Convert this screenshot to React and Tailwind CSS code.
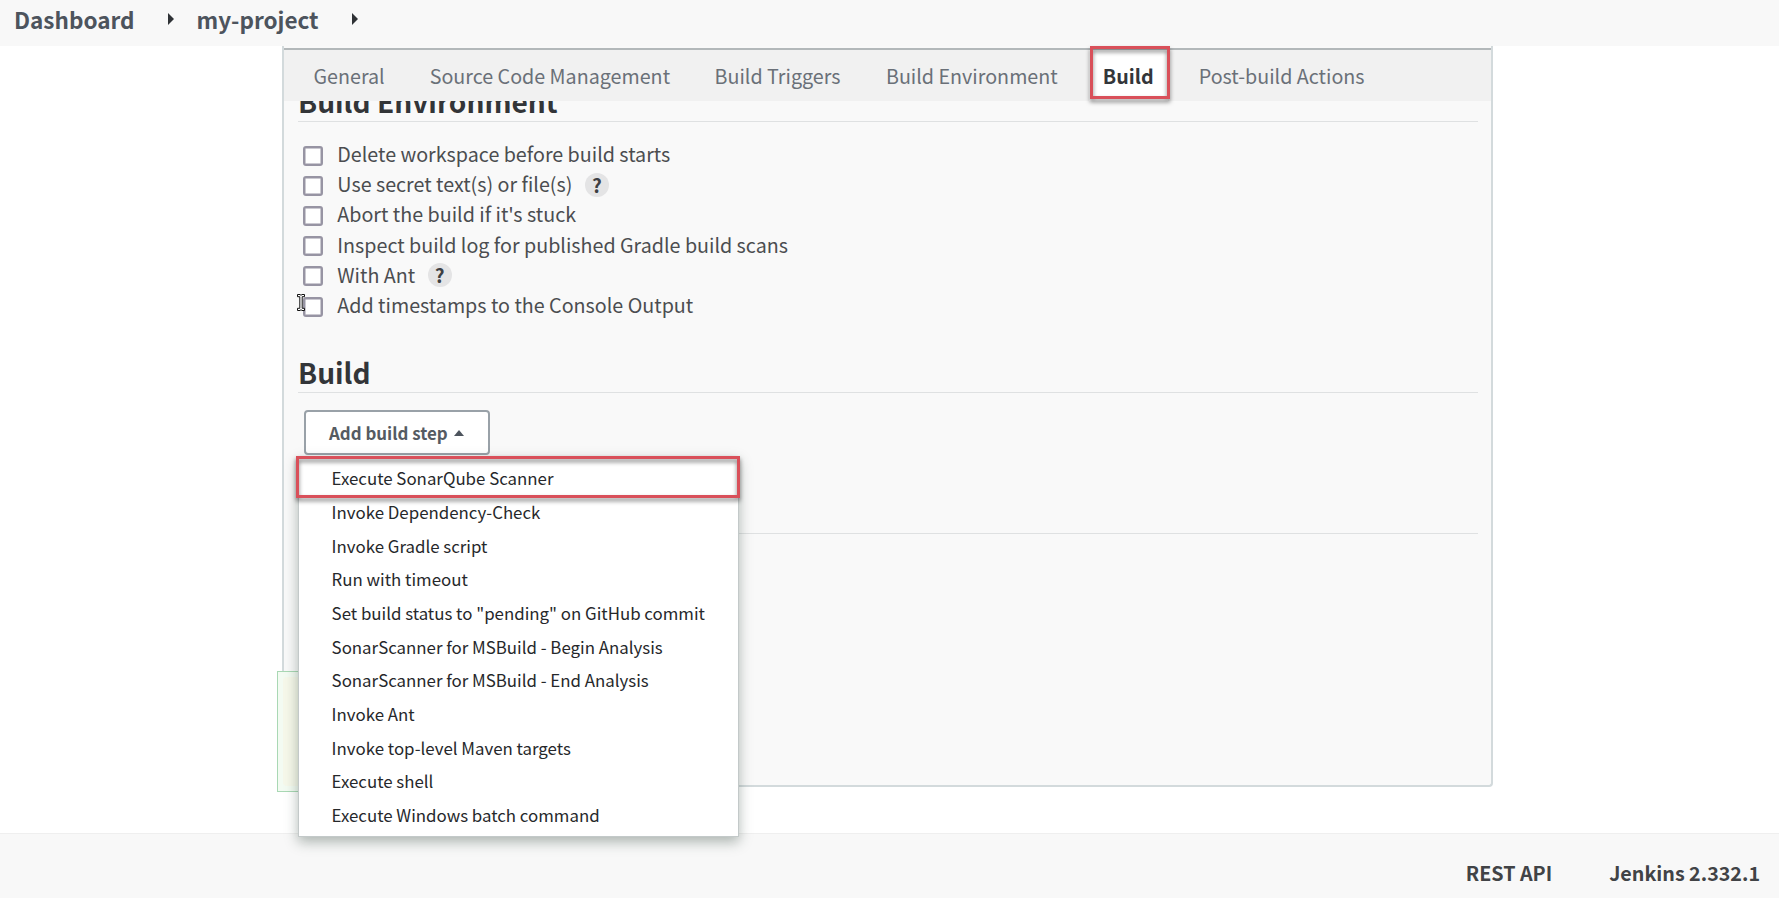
const tabs = [
  { label: "General", className: "ml-[29.5px]" },
  { label: "Source Code Management", className: "ml-[45px]" },
  { label: "Build Triggers", className: "ml-[44.5px]" },
  { label: "Build Environment", className: "ml-[45.5px]" },
];

const options = [
  { label: "Delete workspace before build starts" },
  { label: "Use secret text(s) or file(s)", help: true },
  { label: "Abort the build if it's stuck" },
  { label: "Inspect build log for published Gradle build scans" },
  { label: "With Ant", help: true },
  { label: "Add timestamps to the Console Output", cursor: true },
];

const steps = [
  "Execute SonarQube Scanner",
  "Invoke Dependency-Check",
  "Invoke Gradle script",
  "Run with timeout",
  'Set build status to "pending" on GitHub commit',
  "SonarScanner for MSBuild - Begin Analysis",
  "SonarScanner for MSBuild - End Analysis",
  "Invoke Ant",
  "Invoke top-level Maven targets",
  "Execute shell",
  "Execute Windows batch command",
];

function Arrow({ className }) {
  return (
    <svg viewBox="0 0 6 12" className={`h-3 w-1.5 fill-[#2f3236] ${className}`}>
      <path d="M0 0L6 6L0 12Z" />
    </svg>
  );
}

function TextCursor() {
  return (
    <svg viewBox="0 0 8 17" className="absolute top-[2.5px] left-[-6px] h-[17px] w-2">
      <path
        d="M0.5 0.5H3L4 1.3L5 0.5H7.5V2.7H5.2V14.3H7.5V16.5H5L4 15.7L3 16.5H0.5V14.3H2.8V2.7H0.5Z"
        fill="#fff"
        stroke="#111"
        strokeWidth="1"
      />
    </svg>
  );
}

function Option({ label, help, cursor }) {
  return (
    <div className="relative flex h-[30.2px] items-center">
      <span className="mb-px h-5 w-5 rounded-[3px] border-2 border-[#9794a3] bg-white shadow-[inset_0_0_0_0.5px_#9794a3]" />
      <span className="ml-[14.3px] h-[30px] text-[19.7px] leading-[25px] text-[#4b4d50]">{label}</span>
      {help && (
        <span className="mb-[3px] ml-[12.5px] flex h-6 w-6 items-center justify-center rounded-full bg-[#e4e4e5] text-[19px] leading-6 font-bold text-[#3d3f43]">
          ?
        </span>
      )}
      {cursor && <TextCursor />}
    </div>
  );
}

function HighlightFrame({ className }) {
  return (
    <div
      className={`pointer-events-none absolute border-[3px] border-[#d9505a] drop-shadow-[0_3px_2px_rgba(0,0,0,0.5)] ${className}`}
    />
  );
}

export default function App() {
  return (
    <div className="flex h-[898px] w-[1779px] flex-col overflow-hidden bg-white font-['Noto_Sans_CJK_JP','Noto_Sans_CJK_SC',sans-serif]">
      <header className="flex h-[46px] shrink-0 items-start bg-[#f8f8f8] text-[22.5px] leading-[38px] font-bold text-[#4d545d]">
        <span className="ml-[14px]">Dashboard</span>
        <Arrow className="mt-[13px] ml-[33px]" />
        <span className="ml-[23px]">my-project</span>
        <Arrow className="mt-[13px] ml-[33px]" />
      </header>

      <main className="relative h-[787px] shrink-0">
        <section className="relative ml-[282px] flex h-[741px] w-[1211px] flex-col rounded-b-[4px] border-x-2 border-b-2 border-[#d3dadc] bg-[#f9f9f9] pt-0.5">
          <nav className="relative flex h-[53px] shrink-0 items-stretch border-t-2 border-[#b3b8ba] bg-[#f1f1f1] text-[19.7px] leading-[51px] text-[#6a7078]">
            {tabs.map((t) => (
              <a key={t.label} className={t.className}>
                {t.label}
              </a>
            ))}
            <a className="ml-[31px] w-[79px] bg-white text-center font-bold text-[#33363a]">Build</a>
            <a className="ml-[31px]">Post-build Actions</a>
            <HighlightFrame className="top-[-4px] left-[806px] h-[53px] w-[80px]" />
          </nav>

          <div className="flex flex-col pr-[13px] pl-[14px]">
            <div className="h-[21px] overflow-hidden border-b border-[#dfe1e2]">
              <h2 className="mt-[-18px] text-[28.1px] leading-9 font-bold text-[#333538]">Build Environment</h2>
            </div>
            <div className="mt-[19px] pl-[5px]">
              {options.map((o) => (
                <Option key={o.label} {...o} />
              ))}
            </div>
            <h2 className="mt-[31px] h-[40px] border-b border-[#dfe1e2] text-[28.1px] leading-[38px] font-bold text-[#333538]">
              Build
            </h2>
            <div className="relative mt-[17px] pl-[5.5px]">
              <button className="flex h-[45px] w-[186px] items-center rounded-[4px] border-2 border-[#99a1a8] bg-white pt-[2px] pl-[23.5px] text-[16.9px] leading-none font-bold text-[#555b62]">
                Add build step
                <svg viewBox="0 0 10 6" className="mb-0.5 ml-[6.5px] h-1.5 w-[10px] fill-[#4d545d]">
                  <path d="M0 6L5 0L10 6Z" />
                </svg>
              </button>
              <div className="absolute top-[46px] left-0 z-10 w-[441px] border border-[#c3c9c9] bg-white pb-[4px] shadow-[0_5px_12px_rgba(40,60,50,0.36)]">
                <ul className="pt-1">
                  {steps.map((s) => (
                    <li key={s} className="h-[33.7px] pl-[32.6px] text-[16.85px] leading-[33.2px] text-[#26282b]">
                      {s}
                    </li>
                  ))}
                </ul>
                <HighlightFrame className="top-[-1px] left-[-3px] h-[42px] w-[444px]" />
              </div>
            </div>
            <div className="mt-[78px] border-b border-[#dfe1e2]" />
          </div>
        </section>
        <div className="absolute top-[625px] left-[277px] h-[121px] w-[200px] border border-[#a9d8b4] bg-[#f3fbf2] p-[5px]">
          <div className="h-full rounded-[4px] bg-[#f6f8ea]" />
        </div>
      </main>

      <footer className="flex flex-1 justify-end border-t border-[#efefef] bg-[#f8f8f8] pt-5 pr-[19px] text-[19.7px] leading-[38px] font-bold text-[#414346]">
        <a>REST API</a>
        <a className="ml-[57px]">Jenkins 2.332.1</a>
      </footer>
    </div>
  );
}
